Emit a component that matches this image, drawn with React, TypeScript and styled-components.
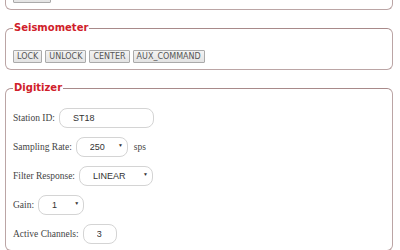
import styled, { createGlobalStyle } from "styled-components";

const GlobalStyle = createGlobalStyle`
  html, body {
    margin: 0;
    padding: 0;
    background: #fff;
    overflow: hidden;
  }
`;

const Page = styled.div`
  padding: 0 7px 0 5px;
  margin-top: -39px;
`;

const Group = styled.fieldset`
  margin: 0 0 11px;
  padding: 0 7px 6px;
  border: 1px solid #bba5a5;
  border-top-color: #a88a8a;
  border-radius: 6px;
`;

const Legend = styled.legend`
  padding: 0 1px;
  font-family: "DejaVu Sans", Verdana, sans-serif;
  font-size: 10px;
  font-weight: bold;
  color: #d0202a;
  line-height: 14px;
`;

const ButtonRow = styled.div`
  display: flex;
  gap: 3px;
  padding-top: 15px;
`;

const CmdButton = styled.button`
  height: 13px;
  padding: 0 3px;
  font-family: "DejaVu Sans", Verdana, sans-serif;
  font-size: 8px;
  color: #555;
  background: linear-gradient(#f3f3f3, #e3e3e3);
  border: 1px solid #aaa;
  border-radius: 1px;
  line-height: 11px;
`;

const Form = styled.div`
  display: flex;
  flex-direction: column;
  gap: 9px;
  padding-top: 13px;
`;

const Row = styled.div`
  display: flex;
  align-items: center;
  height: 20px;
  font-family: "Liberation Serif", "Times New Roman", serif;
  font-size: 9.5px;
  color: #444;
`;

const Label = styled.label`
  margin-right: 4px;
`;

const Unit = styled.span`
  margin-left: 6px;
`;

const TextInput = styled.input<{ $w: number }>`
  box-sizing: border-box;
  width: ${(p) => p.$w}px;
  height: 20px;
  padding: 0 0 0 13px;
  border: 1px solid #d4d4d4;
  border-radius: 8px;
  font-family: "Liberation Sans", Arial, sans-serif;
  font-size: 9px;
  color: #333;
  outline: none;
`;

const SelectWrap = styled.div<{ $w: number }>`
  position: relative;
  width: ${(p) => p.$w}px;
  height: 20px;

  &::after {
    content: "▼";
    position: absolute;
    right: 5px;
    top: 6px;
    font-size: 5px;
    color: #333;
    pointer-events: none;
  }
`;

const Select = styled.select`
  box-sizing: border-box;
  width: 100%;
  height: 20px;
  appearance: none;
  padding: 0 0 0 13px;
  border: 1px solid #d4d4d4;
  border-radius: 8px;
  background: #fff;
  font-family: "Liberation Sans", Arial, sans-serif;
  font-size: 9px;
  color: #333;
  outline: none;
`;

const TopButton = styled(CmdButton)`
  width: 38px;
`;

export default function App() {
  return (
    <Page>
      <GlobalStyle />
      <Group>
        <Legend>Network</Legend>
        <ButtonRow>
          <TopButton>SAVE</TopButton>
        </ButtonRow>
      </Group>
      <Group>
        <Legend>Seismometer</Legend>
        <ButtonRow>
          <CmdButton>LOCK</CmdButton>
          <CmdButton>UNLOCK</CmdButton>
          <CmdButton>CENTER</CmdButton>
          <CmdButton>AUX_COMMAND</CmdButton>
        </ButtonRow>
      </Group>
      <Group>
        <Legend>Digitizer</Legend>
        <Form>
          <Row>
            <Label>Station ID:</Label>
            <TextInput $w={95} defaultValue="ST18" />
          </Row>
          <Row>
            <Label>Sampling Rate:</Label>
            <SelectWrap $w={52}>
              <Select defaultValue="250">
                <option>100</option>
                <option>250</option>
                <option>500</option>
              </Select>
            </SelectWrap>
            <Unit>sps</Unit>
          </Row>
          <Row>
            <Label>Filter Response:</Label>
            <SelectWrap $w={74}>
              <Select defaultValue="LINEAR">
                <option>LINEAR</option>
                <option>MINIMUM</option>
              </Select>
            </SelectWrap>
          </Row>
          <Row>
            <Label>Gain:</Label>
            <SelectWrap $w={46}>
              <Select defaultValue="1">
                <option>1</option>
                <option>2</option>
                <option>4</option>
              </Select>
            </SelectWrap>
          </Row>
          <Row>
            <Label>Active Channels:</Label>
            <TextInput $w={34} defaultValue="3" />
          </Row>
        </Form>
      </Group>
    </Page>
  );
}
